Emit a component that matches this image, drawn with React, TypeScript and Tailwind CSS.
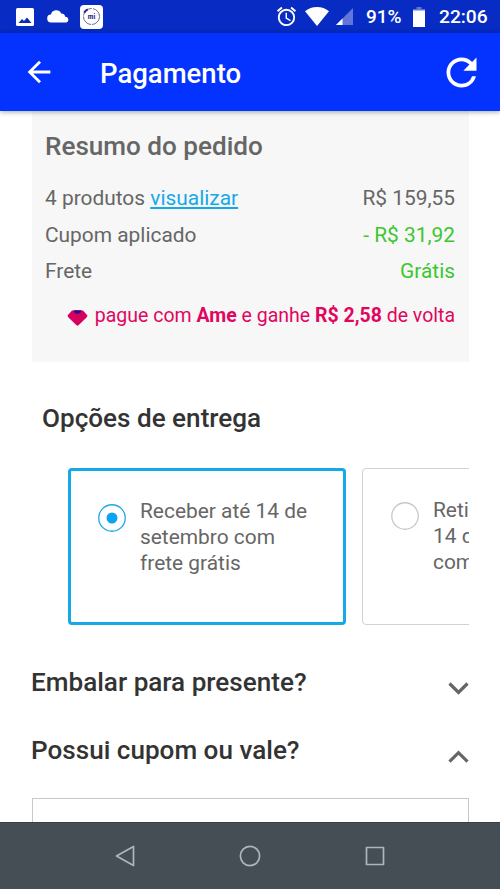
import React, { useState } from 'react';
import { MdAccessAlarm, MdArrowBack, MdRefresh } from 'react-icons/md';

type SummaryRow = { label: string; value: string; link?: string; green?: boolean };
type Delivery = { id: string; lines: string[] };

const rows: SummaryRow[] = [
  { label: '4 produtos', link: 'visualizar', value: 'R$ 159,55' },
  { label: 'Cupom aplicado', value: '- R$ 31,92', green: true },
  { label: 'Frete', value: 'Grátis', green: true },
];

const deliveries: Delivery[] = [
  { id: 'receber', lines: ['Receber até 14 de', 'setembro com', 'frete grátis'] },
  { id: 'retirar', lines: ['Retirar até', '14 de setembro', 'com frete grátis'] },
];

function StatusBar() {
  return (
    <div className="h-[33px] shrink-0 bg-[#072bc3] text-white flex items-center justify-between pl-4 pr-[11px]">
      <div className="flex items-center">
        <svg className="w-[18px] h-[18px]" viewBox="0 0 18 18">
          <rect width="18" height="18" rx="1.5" fill="currentColor" />
          <path d="M2.5 15 6 11l2 2 3-3.5 4.5 5.5z" fill="#072bc3" />
        </svg>
        <svg className="w-[23px] h-[13px] ml-[13px]" viewBox="0 0 23 13">
          <path d="M4.5 12.5a4 4 0 0 1-.6-8A5.5 5.5 0 0 1 14.2 3.4a4 4 0 0 1 4 3.3A3 3 0 0 1 19.4 12.5z" fill="currentColor" />
        </svg>
        <div className="w-[23px] h-6 ml-[10px] rounded-[4px] bg-white grid place-items-center">
          <svg className="w-[19px] h-[19px]" viewBox="0 0 19 19" fill="none">
            <circle cx="9.5" cy="9.5" r="8" stroke="#6a6aa2" strokeWidth="1" strokeDasharray="12 1" />
            <path d="M2.2 5.8 A8 8 0 0 1 5.8 2.4" stroke="#26268a" strokeWidth="2" />
            <text x="9.5" y="11.5" textAnchor="middle" fontSize="6.5" fontWeight="900" fontFamily="Roboto, sans-serif" fill="#34348a">mi</text>
          </svg>
        </div>
      </div>
      <div className="flex items-center">
        <MdAccessAlarm size={23} />
        <svg className="w-6 h-[19px] ml-[7px]" viewBox="0 0 24 19">
          <path d="M12 19 0 4.2C3.4 1.5 7.4 0 12 0s8.6 1.5 12 4.2z" fill="currentColor" />
        </svg>
        <svg className="w-[17px] h-[17px] ml-[7px]" viewBox="0 0 17 17">
          <path d="M0 17 17 0v17z" fill="#6275d9" />
          <path d="M0 17 6.5 10.5V17z" fill="currentColor" />
        </svg>
        <span className="ml-[13px] w-[37px] text-[19px] leading-[22px] font-medium whitespace-nowrap mt-px">91%</span>
        <svg className="w-3 h-[20px] ml-[10px]" viewBox="0 0 12 20">
          <path d="M3.5 0h5v2H12v2H0V2h3.5z" fill="#6275d9" />
          <path d="M0 3.5h12V20H0z" fill="currentColor" />
        </svg>
        <span className="ml-[14px] w-[50px] text-[19.2px] leading-[22px] font-medium whitespace-nowrap mt-px">22:06</span>
      </div>
    </div>
  );
}

function Header() {
  return (
    <div className="relative z-10 h-[78px] shrink-0 bg-[#0433ff] text-white flex items-center pl-[22px] pr-4 shadow-[0_1px_5px_rgba(0,0,0,0.35)]">
      <MdArrowBack size={34} />
      <h1 className="ml-[44px] pt-[3px] text-[27.5px] leading-8 font-medium">Pagamento</h1>
      <MdRefresh size={45} className="ml-auto" />
    </div>
  );
}

function Summary() {
  return (
    <section className="h-[251px] bg-[#f7f7f7] pl-[13px] pr-[14px] pt-[19px] text-[#666]">
      <h2 className="text-[26.1px] leading-8 font-medium">Resumo do pedido</h2>
      <div className="mt-[18px] text-[20.9px] leading-[36.5px]">
        {rows.map((r) => (
          <div key={r.label} className="flex justify-between">
            <span>
              {r.label}
              {r.link && <> <a className="text-[#16a9e8] underline decoration-[1.5px] underline-offset-2">{r.link}</a></>}
            </span>
            <span className={r.green ? 'text-[#3cc72f]' : ''}>{r.value}</span>
          </div>
        ))}
      </div>
      <div className="mt-[14px] flex items-center justify-end text-[19.5px] leading-6 text-[#e0065f] whitespace-nowrap">
        <svg className="w-[21px] h-4 mr-[7px] mt-1" viewBox="0 0 21 16">
          <path d="M5 .5h11L20.5 5.5 19.5 7.5 11.5 15.3q-1 .8-2 0L1.5 7.5.5 5.5z" fill="#d6005f" />
          <path d="M6.5.3h8L13.2 3q-2.7 1.5-5.4 0z" fill="#2b0a86" />
        </svg>
        <span>pague com <b>Ame</b> e ganhe <b>R$ 2,58</b> de volta</span>
      </div>
    </section>
  );
}

function Radio({ on }: { on: boolean }) {
  return (
    <svg className="w-7 h-7 shrink-0" viewBox="0 0 28 28" fill="none">
      <circle cx="14" cy="14" r="13.25" stroke={on ? '#16a9e8' : '#c8c8c8'} strokeWidth="1.3" />
      {on && <circle cx="14" cy="14" r="5.5" fill="#0aa5ee" />}
    </svg>
  );
}

function DeliveryOptions() {
  const [selected, setSelected] = useState('receber');

  return (
    <section className="mt-10">
      <h2 className="pl-[10px] text-[26.1px] leading-8 font-medium text-[#333]">Opções de entrega</h2>
      <div className="mt-[34px] pl-9 flex gap-4 overflow-hidden">
        {deliveries.map((d) => {
          const on = d.id === selected;
          return (
            <button
              key={d.id}
              onClick={() => setSelected(d.id)}
              className={`w-[278px] h-[157px] shrink-0 flex items-start text-left rounded-[4px] ${
                on ? 'border-[3px] border-[#16a9e8] pl-[27px] pt-[27px]' : 'border border-[#d2d2d2] pl-7 pt-7'
              }`}
            >
              <span className={on ? 'mt-[6px]' : 'mt-[5px]'}><Radio on={on} /></span>
              <span className="ml-[14px] text-[20.9px] leading-[26px] text-[#666] whitespace-nowrap">
                {d.lines.map((l) => <span key={l} className="block">{l}</span>)}
              </span>
            </button>
          );
        })}
      </div>
    </section>
  );
}

function Toggle({ title, open }: { title: string; open?: boolean }) {
  return (
    <div className="h-[68px] flex items-start justify-between">
      <h2 className="-ml-px text-[26.1px] leading-8 font-medium text-[#333]">{title}</h2>
      <svg className="w-[21px] h-[13px] mt-4" viewBox="0 0 21 13" fill="none" stroke="#666" strokeWidth="3.2">
        <path d={open ? 'M1.5 11.7 10.5 2.7l9 9' : 'M1.5 1.5l9 9 9-9'} />
      </svg>
    </div>
  );
}

function NavBar() {
  return (
    <div className="h-[67px] shrink-0 bg-[#454e54] border-t border-[#393f43] flex items-center justify-center">
      <svg className="w-[22px] h-[22px]" viewBox="0 0 22 22" fill="none" stroke="#b0b5bb" strokeWidth="1.7" strokeLinejoin="round">
        <path d="M2.5 11 19.5 1.5v19z" />
      </svg>
      <svg className="w-[22px] h-[22px] ml-[103px]" viewBox="0 0 22 22" fill="none" stroke="#b0b5bb" strokeWidth="1.7">
        <circle cx="11" cy="11" r="9.6" />
      </svg>
      <svg className="w-[22px] h-[22px] ml-[103px]" viewBox="0 0 22 22" fill="none" stroke="#b0b5bb" strokeWidth="1.7" strokeLinejoin="round">
        <rect x="2.5" y="2.5" width="17" height="17" />
      </svg>
    </div>
  );
}

export default function App() {
  return (
    <div className="w-[500px] h-[889px] overflow-hidden bg-white flex flex-col font-[Roboto,sans-serif]">
      <StatusBar />
      <Header />
      <main className="flex-1 min-h-0 overflow-hidden pl-8 pr-[31px]">
        <Summary />
        <DeliveryOptions />
        <div className="mt-[41px]">
          <Toggle title="Embalar para presente?" />
          <Toggle title="Possui cupom ou vale?" open />
        </div>
        <div className="-mt-[4px] h-[60px] border border-[#c8c8c8]" />
      </main>
      <NavBar />
    </div>
  );
}
